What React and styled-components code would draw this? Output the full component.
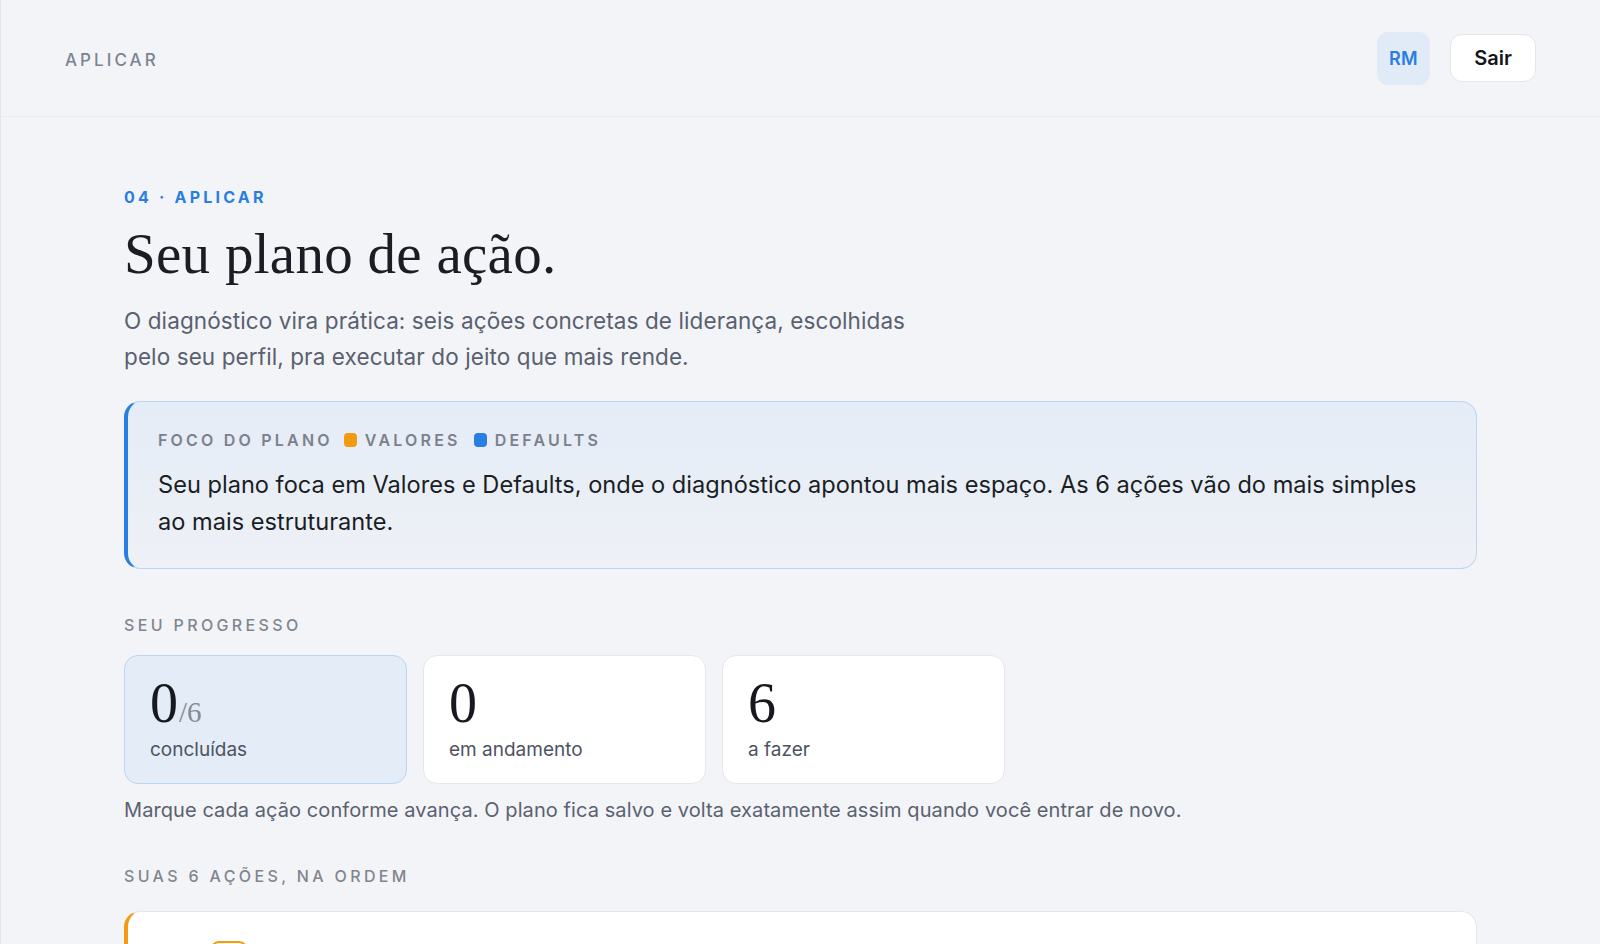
import React from "react";
import styled, { createGlobalStyle } from "styled-components";

const GlobalStyle = createGlobalStyle`
  * { box-sizing: border-box; }
  html, body { margin: 0; padding: 0; background: #f3f4f7; }
  body {
    font-family: Inter, "Noto Sans", "Liberation Sans", sans-serif;
    color: #1b1e24;
    -webkit-font-smoothing: antialiased;
  }
`;

const Shell = styled.div`
  min-height: 100vh;
  background: #f3f4f7;
  border-left: 1px solid #e4e6ea;
`;

const Header = styled.header`
  height: 117px;
  display: flex;
  align-items: center;
  justify-content: space-between;
  padding: 0 64px;
  border-bottom: 1px solid #e9ebef;
`;

const Brand = styled.div`
  font-size: 17px;
  font-weight: 500;
  letter-spacing: 0.18em;
  color: #7d838e;
  margin-top: 3px;
`;

const HeaderActions = styled.div`
  display: flex;
  align-items: center;
  gap: 20px;
`;

const Avatar = styled.div`
  width: 53px;
  height: 53px;
  border-radius: 11px;
  background: #e1ebf7;
  color: #2a7de1;
  font-weight: 600;
  font-size: 18px;
  display: flex;
  align-items: center;
  justify-content: center;
  letter-spacing: 0.02em;
`;

const Button = styled.button`
  width: 86px;
  height: 48px;
  border-radius: 12px;
  border: 1px solid #e3e5e9;
  background: #ffffff;
  font-family: inherit;
  font-size: 20px;
  font-weight: 600;
  color: #14161a;
  cursor: pointer;
`;

const Main = styled.main`
  max-width: 1353px;
  margin: 0 auto;
  padding-top: 70px;
  padding-bottom: 80px;
`;

const Eyebrow = styled.div`
  font-size: 16px;
  line-height: 20px;
  font-weight: 700;
  letter-spacing: 0.2em;
  color: #2a7de1;
`;

const Title = styled.h1`
  margin: 16px 0 0;
  font-family: "Liberation Serif", "DejaVu Serif", serif;
  font-weight: 400;
  font-size: 57px;
  line-height: 62px;
  color: #1a1d23;
  letter-spacing: 0.005em;
`;

const Lead = styled.p`
  margin: 18px 0 0;
  max-width: 810px;
  font-size: 22.5px;
  line-height: 35.5px;
  letter-spacing: 0.1px;
  color: #596070;
`;

const Callout = styled.section`
  margin-top: 27px;
  border: 1px solid #bcd5f1;
  border-left: 4px solid #2a7de1;
  border-radius: 16px;
  background: linear-gradient(180deg, #e4ecf7 0%, #eef1f6 100%);
  padding: 28px 30px 28px 30px;
`;

const CalloutLabel = styled.div`
  display: flex;
  align-items: center;
  font-size: 16px;
  line-height: 20px;
  font-weight: 600;
  letter-spacing: 0.2em;
  color: #7b818c;
`;

const Tag = styled.span`
  display: inline-flex;
  align-items: center;
  margin-left: ${(p) => p.$gap}px;
  &::before {
    content: "";
    width: 13px;
    height: 14px;
    border-radius: 4px;
    background: ${(p) => p.$color};
    margin-right: 8px;
  }
`;

const CalloutText = styled.p`
  margin: 16px 0 0;
  font-size: 23.6px;
  line-height: 37px;
  color: #1b1e24;
`;

const SectionLabel = styled.div`
  margin-top: ${(p) => p.$top}px;
  font-size: 16px;
  line-height: 20px;
  font-weight: 500;
  letter-spacing: 0.21em;
  color: #80868f;
`;

const Stats = styled.div`
  margin-top: 20px;
  display: grid;
  grid-template-columns: repeat(3, 283px);
  gap: 16px;
`;

const StatCard = styled.div`
  height: 129px;
  border-radius: 14px;
  border: 1px solid ${(p) => (p.$active ? "#bcd5f1" : "#e5e7eb")};
  background: ${(p) => (p.$active ? "#e3ecf7" : "#ffffff")};
  padding: 19px 24px 0 25px;
`;

const StatValue = styled.div`
  font-family: "Liberation Serif", "DejaVu Serif", serif;
  font-size: 56px;
  line-height: 56px;
  height: 56px;
  color: #17191e;
`;

const StatTotal = styled.span`
  font-size: 29px;
  line-height: 1;
  color: #858b95;
  margin-left: 1px;
`;

const StatLabel = styled.div`
  margin-top: 5px;
  font-size: 19px;
  line-height: 28px;
  color: #4d5361;
`;

const Note = styled.p`
  margin: 10px 0 0;
  font-size: 20px;
  line-height: 32px;
  letter-spacing: 0.08px;
  color: #5a6170;
`;

const ActionCard = styled.article`
  margin-top: 25px;
  border: 1px solid #e4e6ea;
  border-left: 4px solid #f29b12;
  border-radius: 16px;
  background: #ffffff;
  padding: 29px 30px 30px 30px;
  display: flex;
  align-items: flex-start;
  gap: 16px;
`;

const Check = styled.div`
  width: 36px;
  height: 36px;
  margin-top: 10px;
  border-radius: 10px;
  border: 2px solid #d5d9df;
  flex: none;
`;

const StepBadge = styled.div`
  width: 38px;
  height: 38px;
  border: 2px solid #f29b12;
  border-radius: 9px;
  background: #fff8ec;
  flex: none;
`;

export default function App() {
  return (
    <>
      <GlobalStyle />
      <Shell>
        <Header>
          <Brand>APLICAR</Brand>
          <HeaderActions>
            <Avatar>RM</Avatar>
            <Button>Sair</Button>
          </HeaderActions>
        </Header>
        <Main>
          <Eyebrow>04 · APLICAR</Eyebrow>
          <Title>Seu plano de ação.</Title>
          <Lead>
            O diagnóstico vira prática: seis ações concretas de liderança, escolhidas
            pelo seu perfil, pra executar do jeito que mais rende.
          </Lead>
          <Callout>
            <CalloutLabel>
              FOCO DO PLANO
              <Tag $color="#f29b12" $gap={11}>VALORES</Tag>
              <Tag $color="#2a7de1" $gap={13}>DEFAULTS</Tag>
            </CalloutLabel>
            <CalloutText>
              Seu plano foca em Valores e Defaults, onde o diagnóstico apontou mais espaço.
              As 6 ações vão do mais simples ao mais estruturante.
            </CalloutText>
          </Callout>

          <SectionLabel $top={46}>SEU PROGRESSO</SectionLabel>
          <Stats>
            <StatCard $active>
              <StatValue>
                0<StatTotal>/6</StatTotal>
              </StatValue>
              <StatLabel>concluídas</StatLabel>
            </StatCard>
            <StatCard>
              <StatValue>0</StatValue>
              <StatLabel>em andamento</StatLabel>
            </StatCard>
            <StatCard>
              <StatValue>6</StatValue>
              <StatLabel>a fazer</StatLabel>
            </StatCard>
          </Stats>
          <Note>
            Marque cada ação conforme avança. O plano fica salvo e volta exatamente assim
            quando você entrar de novo.
          </Note>

          <SectionLabel $top={40}>SUAS 6 AÇÕES, NA ORDEM</SectionLabel>
          <ActionCard>
            <Check />
            <StepBadge />
          </ActionCard>
        </Main>
      </Shell>
    </>
  );
}
